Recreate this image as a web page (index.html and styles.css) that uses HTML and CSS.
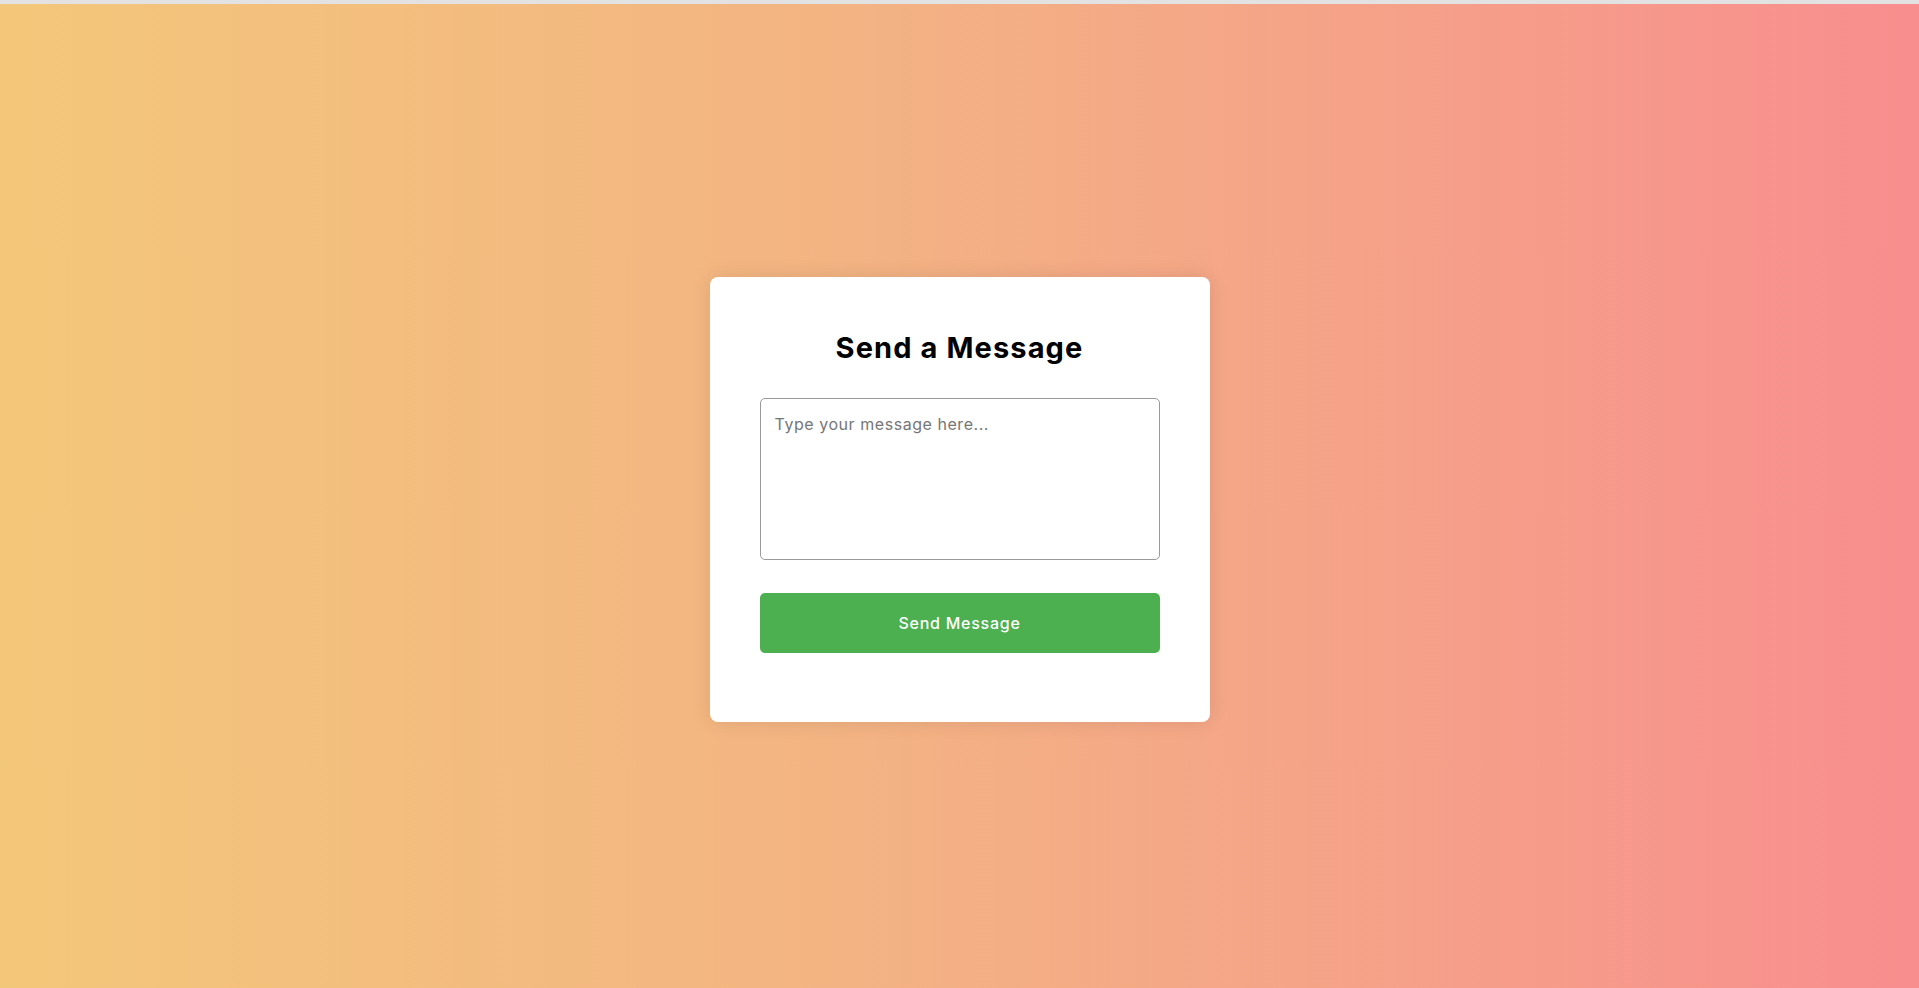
FILE: index.html
```html
<!DOCTYPE html>
<html lang="en">
<head>
<meta charset="utf-8">
<title>Send a Message</title>
<link rel="stylesheet" href="styles.css">
</head>
<body>
<div class="topbar"></div>
<main class="page">
  <section class="card">
    <h2 class="title">Send a Message</h2>
    <form class="form">
      <textarea class="message" placeholder="Type your message here..."></textarea>
      <button type="button" class="send">Send Message</button>
    </form>
  </section>
</main>
</body>
</html>
```

FILE: styles.css
```css
html, body {
  margin: 0;
  padding: 0;
}

body {
  font-family: Inter, "Noto Sans", sans-serif;
  overflow: hidden;
}

.topbar {
  height: 4px;
  background: #e2e2e2;
}

.page {
  height: 984px;
  box-sizing: border-box;
  padding-top: 273px;
  display: flex;
  justify-content: center;
  align-items: flex-start;
  background: linear-gradient(to right, #f3c77a 0%, #f3b383 45%, #f88e8e 100%);
}

.card {
  width: 500px;
  height: 445px;
  box-sizing: border-box;
  padding: 51px 50px 0;
  background: #fff;
  border-radius: 8px;
  box-shadow: 0 0 20px rgba(0, 0, 0, 0.1);
}

.title {
  margin: 0;
  font-size: 29px;
  line-height: 40px;
  font-weight: 700;
  letter-spacing: 1.1px;
  text-align: center;
  color: #000;
}

.form {
  margin-top: 30px;
  display: flex;
  flex-direction: column;
  gap: 33px;
}

.message {
  display: block;
  width: 400px;
  height: 162px;
  box-sizing: border-box;
  padding: 15px 14px;
  border: 1px solid #999;
  border-radius: 5px;
  font-family: inherit;
  font-size: 16px;
  letter-spacing: 0.55px;
  resize: none;
  outline: none;
  color: #333;
}

.message::placeholder {
  color: #767676;
}

.send {
  width: 400px;
  height: 60px;
  border: none;
  border-radius: 5px;
  background: #4caf50;
  color: #fff;
  font-family: inherit;
  font-size: 16px;
  font-weight: 500;
  letter-spacing: 0.75px;
  cursor: pointer;
}
```
